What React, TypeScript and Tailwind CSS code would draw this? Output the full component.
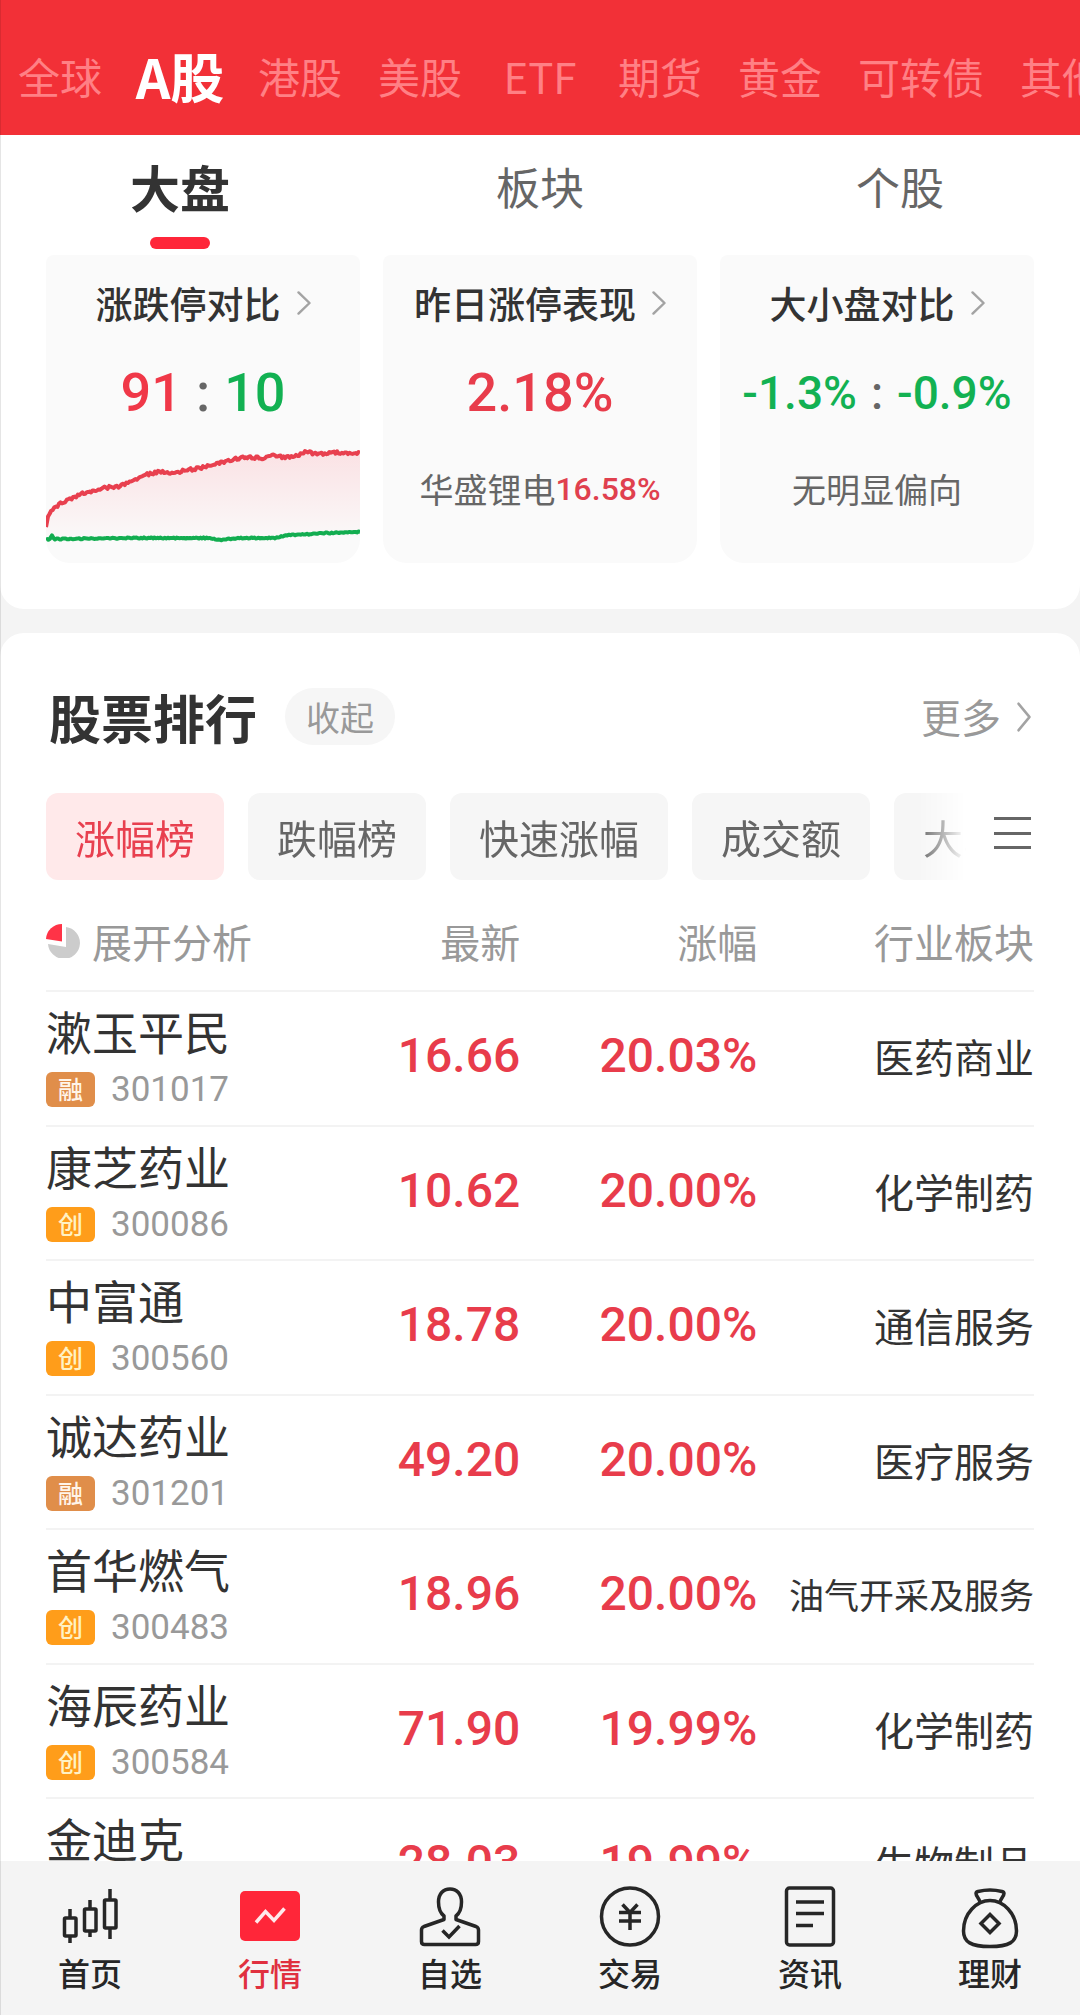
import { useState } from 'react';
import type { ReactNode } from 'react';

interface Stock {
    name: string;
    code: string;
    tag: '融' | '创';
    price: string;
    change: string;
    industry: string;
}

const markets = ['全球', 'A股', '港股', '美股', 'ETF', '期货', '黄金', '可转债', '其他'];
const views = ['大盘', '板块', '个股'];
const rankings = ['涨幅榜', '跌幅榜', '快速涨幅', '成交额', '大单净额'];

const stocks: Stock[] = [
    { name: '漱玉平民', code: '301017', tag: '融', price: '16.66', change: '20.03%', industry: '医药商业' },
    { name: '康芝药业', code: '300086', tag: '创', price: '10.62', change: '20.00%', industry: '化学制药' },
    { name: '中富通', code: '300560', tag: '创', price: '18.78', change: '20.00%', industry: '通信服务' },
    { name: '诚达药业', code: '301201', tag: '融', price: '49.20', change: '20.00%', industry: '医疗服务' },
    { name: '首华燃气', code: '300483', tag: '创', price: '18.96', change: '20.00%', industry: '油气开采及服务' },
    { name: '海辰药业', code: '300584', tag: '创', price: '71.90', change: '19.99%', industry: '化学制药' },
    { name: '金迪克', code: '688670', tag: '融', price: '28.03', change: '19.99%', industry: '生物制品' },
];

const upLine: [number, number][] = [
    [0, 81], [2, 72], [5, 65], [10, 61], [16, 56], [24, 53], [35, 48], [45, 46], [57, 42], [74, 40],
    [85, 35], [98, 29], [112, 26], [126, 27], [143, 24], [160, 21], [178, 16], [197, 11], [216, 12],
    [226, 9], [236, 11], [250, 10], [259, 6], [274, 8], [288, 6], [302, 8], [314, 7],
];
const downLine: [number, number][] = [
    [0, 94], [4, 93], [6, 90], [9, 93], [95, 92], [165, 92], [174, 94], [195, 92], [229, 92],
    [243, 89], [264, 88], [281, 87], [314, 86],
];

// fills in the minute ticks between the sampled points
function toPath(points: [number, number][], noise: number) {
    let d = `M${points[0][0]} ${points[0][1]}`;
    for (let i = 1; i < points.length; i++) {
        const [x0, y0] = points[i - 1];
        const [x1, y1] = points[i];
        const steps = Math.max(1, Math.round((x1 - x0) / 1.5));
        for (let s = 1; s <= steps; s++) {
            const x = x0 + ((x1 - x0) * s) / steps;
            const jitter = (Math.sin(x * 78.233) * 43758.5) % 1;
            const y = y0 + ((y1 - y0) * s) / steps + jitter * noise;
            d += ` L${x.toFixed(1)} ${y.toFixed(1)}`;
        }
    }
    return d;
}

function LimitChart() {
    const up = toPath(upLine, 1.5);
    return (
        <svg className="mt-[23px] block h-[100px] w-full" viewBox="0 0 314 100" preserveAspectRatio="none" fill="none">
            <defs>
                <linearGradient id="upFill" x1="0" y1="0" x2="0" y2="1">
                    <stop offset="0" stopColor="#ff2f43" stopOpacity="0.12" />
                    <stop offset="1" stopColor="#ff2f43" stopOpacity="0.01" />
                </linearGradient>
            </defs>
            <path d={`${up} L314 90 L0 90 Z`} fill="url(#upFill)" />
            <path d={up} stroke="#e8404f" strokeWidth="4" strokeLinejoin="round" />
            <path d={toPath(downLine, 0.6)} stroke="#12ad50" strokeWidth="4" strokeLinejoin="round" />
        </svg>
    );
}

function Chevron({ className }: { className: string }) {
    return (
        <svg className={className} viewBox="0 0 14 26" fill="none" stroke="#a3a3a3" strokeWidth="2.4" preserveAspectRatio="none">
            <path d="M1.5 1.5 L12.5 13 L1.5 24.5" strokeLinecap="round" strokeLinejoin="round" />
        </svg>
    );
}

function Card({ title, children }: { title: string; children: ReactNode }) {
    return (
        <article className="rounded-t-lg rounded-b-3xl bg-[#fafafa] pt-7 pb-[17px] text-center">
            <h2>
                <a href="#detail" className="flex items-center justify-center gap-4 text-[37px] leading-10 font-medium text-[#333]">
                    {title}
                    <Chevron className="h-6 w-[14px]" />
                </a>
            </h2>
            {children}
        </article>
    );
}

const navItems: { label: string; icon: ReactNode }[] = [
    {
        label: '首页',
        icon: (
            <>
                <path d="M12 24V33M12 51V58M32 15V24M32 46V52M52 4V15M52 43V54" />
                <rect x="6.5" y="33" width="11.5" height="18" rx="1" />
                <rect x="26.5" y="24" width="11.5" height="22" rx="1" />
                <rect x="46.5" y="15" width="11.5" height="28" rx="1" />
            </>
        ),
    },
    {
        label: '行情',
        icon: (
            <>
                <rect x="2" y="6" width="60" height="50" rx="5" fill="#ff2639" stroke="none" />
                <path d="M18 37.5L27.5 26.5L36 35.5L46.5 23.5" stroke="#ffe9eb" />
            </>
        ),
    },
    {
        label: '自选',
        icon: (
            <>
                <path d="M26 31C21.500 27.500 20.500 22 20.500 17C20.500 9 25 4 32 4S43.500 9 43.500 17C43.500 22 42.500 27.500 38 31V34.500L58 41.500Q60.500 42.500 60.500 45V56.500Q60.500 59.500 57.500 59.500H6.500Q3.500 59.500 3.500 56.500V45Q3.500 42.500 6 41.500L26 34.500Z" strokeLinejoin="round" />
                <path d="M24.500 45.500L31 52L41.500 41" />
            </>
        ),
    },
    {
        label: '交易',
        icon: (
            <>
                <circle cx="32" cy="31.500" r="28.500" />
                <path d="M24.500 19.500L32 27.500L39.500 19.500M21 27.500H43M21 36H43M32 27.500V45" />
            </>
        ),
    },
    {
        label: '资讯',
        icon: (
            <>
                <rect x="8.500" y="3" width="47" height="57" rx="3" />
                <path d="M18 17H46M18 28.500H46M18 40.500H35" />
            </>
        ),
    },
    {
        label: '理财',
        icon: (
            <>
                <path d="M22 17C21 13 18 11 18 8.500Q18 7 20 6.500C28 4.500 36 4.500 44 6.500Q46 7 46 8.500C46 11 43 13 42 17" strokeLinejoin="round" />
                <path d="M32 15.500C45 15.500 58.500 28 58.500 46C58.500 57 51 61.500 32 61.500S5.500 57 5.500 46C5.500 28 19 15.500 32 15.500Z" />
                <path d="M32 29.500L41 38.500L32 47.500L23 38.500Z" />
            </>
        ),
    },
];

export default function App() {
    const [market, setMarket] = useState('A股');
    const [view, setView] = useState('大盘');
    const [ranking, setRanking] = useState('涨幅榜');
    const [page, setPage] = useState('行情');

    return (
        <div className="relative flex h-screen flex-col overflow-hidden bg-[#f4f4f4] font-['Noto_Sans_CJK_SC',sans-serif] text-[#333]">
            <div className="pointer-events-none absolute inset-y-0 left-0 z-10 w-px bg-black/10" />

            <header className="shrink-0 overflow-hidden bg-[#f23037]">
                <nav className="flex h-[135px] items-center gap-9 pt-4 pl-[18px]">
                    {markets.map(item => (
                        <button
                            key={item}
                            onClick={() => setMarket(item)}
                            className={`flex shrink-0 justify-center whitespace-nowrap ${item.length > 2 && item !== 'ETF' ? 'w-[126px]' : 'w-[84px]'} ${
                                item === market ? 'text-[54px] leading-[60px] font-bold text-white' : 'text-[42px] leading-[60px] text-[#ff8085]'
                            }`}
                        >
                            {item}
                        </button>
                    ))}
                </nav>
            </header>

            <main className="min-h-0 flex-1 overflow-y-auto [scrollbar-width:none]">
                <section className="rounded-b-3xl bg-white pb-[46px]">
                    <div className="grid grid-cols-3">
                        {views.map(item => (
                            <button key={item} onClick={() => setView(item)} className="flex h-[120px] flex-col items-center pt-[26px]">
                                <span className={item === view ? 'text-[50px] leading-[50px] font-bold' : 'text-[44px] leading-[50px] text-[#666]'}>
                                    {item}
                                </span>
                                {item === view && <span className="mt-[26px] h-3 w-15 rounded-full bg-[#ff2639]" />}
                            </button>
                        ))}
                    </div>
                    <div className="grid grid-cols-3 gap-[23px] px-[46px]">
                        <Card title="涨跌停对比">
                            <p className="mt-10 flex justify-center gap-[14px] font-[Roboto,sans-serif] text-[54px] leading-[60px] font-medium">
                                <span className="text-[#f03848]">91</span>
                                <span className="text-[#666]">:</span>
                                <span className="text-[#12b152]">10</span>
                            </p>
                            <LimitChart />
                        </Card>
                        <Card title="昨日涨停表现">
                            <p className="mt-10 font-[Roboto,sans-serif] text-[54px] leading-[60px] font-medium text-[#e83c4b]">2.18%</p>
                            <p className="mt-[46px] flex items-center justify-center text-[34px] leading-10 text-[#666]">
                                华盛锂电
                                <span className="font-[Roboto,sans-serif] text-[32px] font-medium text-[#e0404e]">16.58%</span>
                            </p>
                        </Card>
                        <Card title="大小盘对比">
                            <p className="mt-10 flex justify-center gap-[14px] font-[Roboto,sans-serif] text-[46px] leading-[60px] font-medium text-[#12b152]">
                                <span>-1.3%</span>
                                <span className="text-[#666]">:</span>
                                <span>-0.9%</span>
                            </p>
                            <p className="mt-[46px] text-[34px] leading-10 text-[#666]">无明显偏向</p>
                        </Card>
                    </div>
                </section>

                <section className="mt-6 rounded-t-3xl bg-white px-[46px] pt-[55px]">
                    <div className="flex h-[57px] items-center px-[3px]">
                        <h2 className="text-[52px] leading-[57px] font-bold">股票排行</h2>
                        <button className="ml-7 h-[57px] rounded-full bg-[#f6f6f6] px-[21px] text-[34px] leading-[57px] text-[#999]">收起</button>
                        <a href="#more" className="ml-auto flex items-center gap-4 text-[40px] leading-[57px] text-[#999]">
                            更多
                            <Chevron className="h-[30px] w-[14px]" />
                        </a>
                    </div>

                    <div className="mt-12 flex items-center">
                        <div className="flex min-w-0 flex-1 gap-6 overflow-hidden [mask-image:linear-gradient(to_right,black_calc(100%-48px),transparent)]">
                            {rankings.map(item => (
                                <button
                                    key={item}
                                    onClick={() => setRanking(item)}
                                    className={`h-[87px] shrink-0 rounded-xl px-[29px] text-[40px] leading-[88px] ${
                                        item === ranking ? 'bg-[#ffe9ea] text-[#e8404f]' : 'bg-[#f6f6f6] text-[#666]'
                                    }`}
                                >
                                    {item}
                                </button>
                            ))}
                        </div>
                        <button aria-label="全部榜单" className="ml-7 pb-2">
                            <svg className="h-9 w-10" viewBox="0 0 40 36" stroke="#666" strokeWidth="3">
                                <path d="M0 3.500H37M0 18.500H37M0 32.500H37" />
                            </svg>
                        </button>
                    </div>

                    <table className="w-full table-fixed">
                        <thead>
                            <tr className="h-[111px] text-right text-[40px] leading-[50px] text-[#999]">
                                <th className="w-[26%] pt-3 text-left font-normal">
                                    <button className="flex items-center gap-3 whitespace-nowrap">
                                        <svg className="h-[34px] w-[34px]" viewBox="0 0 34 34">
                                            <path d="M20 3A16 16 0 1 1 2 20L20 23Z" fill="#ccc" />
                                            <path d="M16 0V17.500L0 15A16 16 0 0 1 16 0Z" fill="#ff3347" />
                                        </svg>
                                        展开分析
                                    </button>
                                </th>
                                <th className="w-[22%] pt-3 font-normal">最新</th>
                                <th className="w-[24%] pt-3 font-normal">涨幅</th>
                                <th className="pt-3 font-normal">行业板块</th>
                            </tr>
                        </thead>
                        <tbody>
                            {stocks.map(stock => (
                                <tr key={stock.code} className="h-[135px] border-t-2 border-[#f3f3f3] text-right align-top leading-[52px] even:h-[134px]">
                                    <td className="pt-3 text-left">
                                        <div className="text-[46px] whitespace-nowrap">{stock.name}</div>
                                        <div className="mt-4 flex items-center gap-4">
                                            <span
                                                className={`h-[35px] w-[49px] rounded-md text-center text-[25px] leading-[33px] font-medium ${
                                                    stock.tag === '融' ? 'bg-[#e08e4a] text-[#fff5ea]' : 'bg-[#ff9d1a] text-[#fff2c4]'
                                                }`}
                                            >
                                                {stock.tag}
                                            </span>
                                            <span className="font-[Roboto,sans-serif] text-[35px] leading-[35px] text-[#999]">{stock.code}</span>
                                        </div>
                                    </td>
                                    <td className="pt-[38px] font-[Roboto,sans-serif] text-[48px] font-medium text-[#e83c4b]">{stock.price}</td>
                                    <td className="pt-[38px] font-[Roboto,sans-serif] text-[48px] font-medium text-[#e83c4b]">{stock.change}</td>
                                    <td className={`pt-[38px] whitespace-nowrap ${stock.industry.length > 6 ? 'text-[35px]' : 'text-[40px]'}`}>
                                        {stock.industry}
                                    </td>
                                </tr>
                            ))}
                        </tbody>
                    </table>
                </section>
            </main>

            <nav className="grid shrink-0 grid-cols-6 bg-[#f4f4f4] pt-6 pb-[25px]">
                {navItems.map(({ label, icon }) => (
                    <button
                        key={label}
                        onClick={() => setPage(label)}
                        className={`flex flex-col items-center text-[32px] leading-9 font-medium ${label === page ? 'text-[#e0303f]' : 'text-[#262626]'}`}
                    >
                        <svg className="mb-[5px] h-16 w-16" viewBox="0 0 64 64" fill="none" stroke="#262626" strokeWidth="3.500">
                            {icon}
                        </svg>
                        {label}
                    </button>
                ))}
            </nav>
        </div>
    );
}
